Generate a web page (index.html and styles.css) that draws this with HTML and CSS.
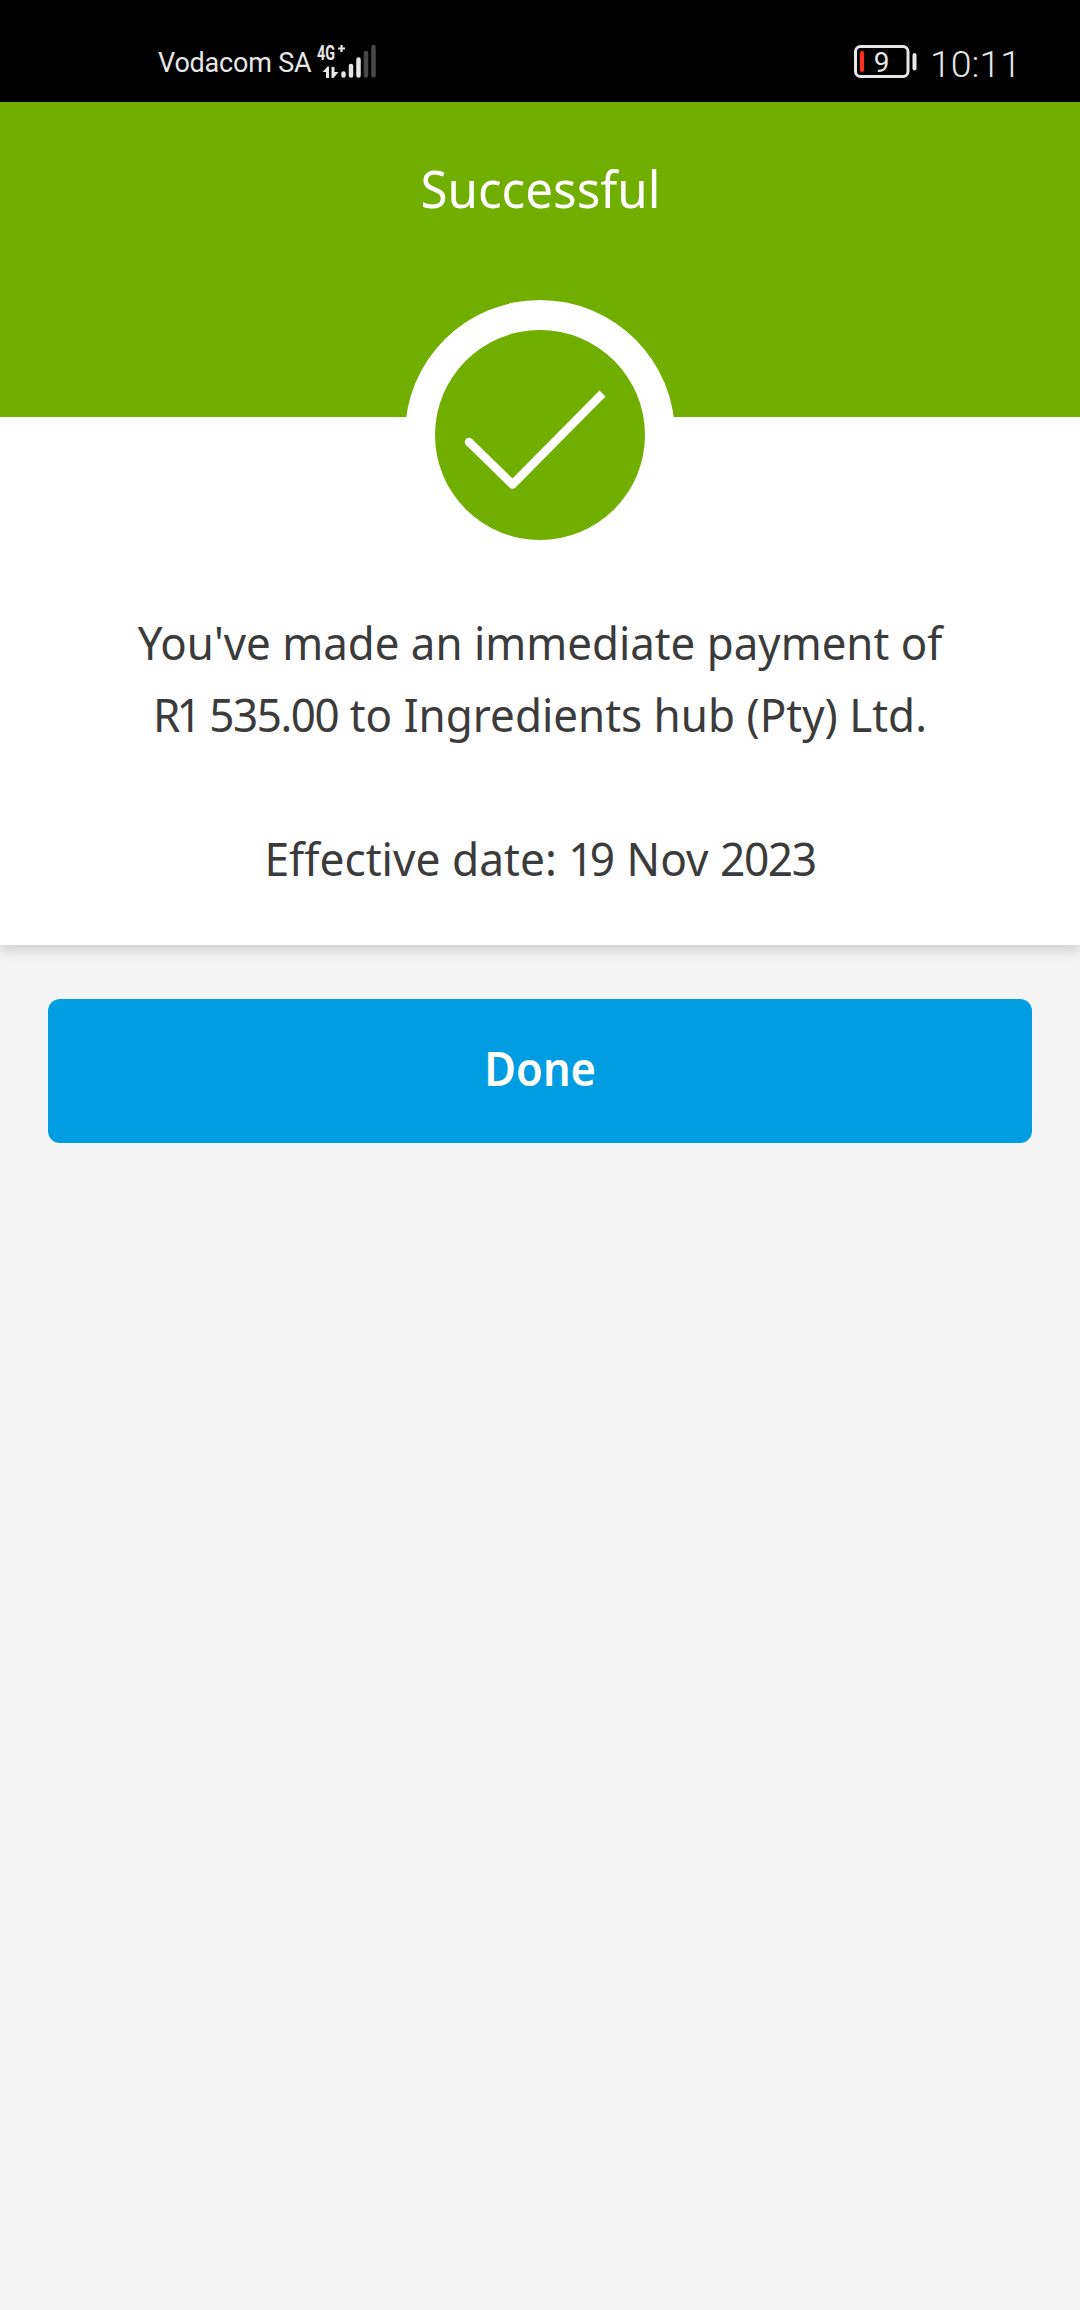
FILE: index.html
```html
<!DOCTYPE html>
<html lang="en">
<head>
<meta charset="utf-8">
<title>Payment successful</title>
<link rel="stylesheet" href="styles.css">
</head>
<body>
<div class="status-bar">
  <div class="network">
    <span class="carrier">Vodacom SA</span>
    <svg class="signal" width="60" height="44" viewBox="0 -8 60 44">
      <text class="signal-type" x="0" y="15.500" textLength="18" lengthAdjust="spacingAndGlyphs">4G</text>
      <path d="M24.500 1v7M21 4.500h7" stroke="#e6e6e6" stroke-width="2.200" fill="none"/>
      <path d="M5.500 28l5-5.500h1.500V34H9v-6z M14.500 23h3v5h4l-5 6h-2z" fill="#e6e6e6"/>
      <g stroke="#e6e6e6" stroke-width="4.500" stroke-linecap="round">
        <path d="M26.500 29.500v2M34 22v9.500M41.500 15.500v16"/>
        <path d="M49 9v22.500M56.500 3v28.500" stroke="#484848"/>
      </g>
    </svg>
  </div>
  <div class="device">
    <svg class="battery" width="64" height="34" viewBox="0 0 64 34">
      <rect x="1.500" y="1.500" width="52.500" height="30" rx="5" fill="none" stroke="#e6e6e6" stroke-width="3"/>
      <path d="M8 8v17" stroke="#ff3120" stroke-width="4.200" stroke-linecap="round"/>
      <path d="M60.500 10v13.500" stroke="#e6e6e6" stroke-width="4" stroke-linecap="round"/>
      <text class="battery-level" x="27.500" y="27" text-anchor="middle">9</text>
    </svg>
    <span class="clock">10:11</span>
  </div>
</div>
<main>
  <section class="result">
    <header class="banner">
      <h1 class="title">Successful</h1>
      <svg class="badge" width="270" height="270" viewBox="0 0 270 270">
        <circle cx="135" cy="135" r="135" fill="#fff"/>
        <circle cx="135" cy="135" r="105" fill="#70ae00"/>
        <path d="M64 142L107.500 184.500L197.500 93.500" fill="none" stroke="#fff" stroke-width="8.500" stroke-linejoin="round"/>
        <circle cx="64" cy="142" r="4.250" fill="#fff"/>
      </svg>
    </header>
    <div class="message">
      <p class="line">You've made an immediate payment of</p>
      <p class="line payee"><span class="one">R</span><span class="one">1</span> <span class="digits">535.00</span> to Ingredients hub (Pty) Ltd.</p>
      <p class="line date">Effective date: <span class="one">1</span>9 Nov <span class="digits">2023</span></p>
    </div>
  </section>
  <button class="done" type="button"><span class="label">Done</span></button>
</main>
</body>
</html>
```
FILE: styles.css
```css
* { box-sizing: border-box; }
body {
  margin: 0;
  min-height: 2310px;
  background: #f4f4f4;
  color: #3b3b3b;
  font-family: "Noto Sans", "Open Sans", sans-serif;
}
.status-bar {
  display: flex;
  justify-content: space-between;
  height: 102px;
  padding: 0 60px 0 158px;
  background: #000;
  color: #e6e6e6;
  font-family: Roboto, sans-serif;
}
.network, .device { display: flex; align-items: flex-start; }
.carrier { width: 159px; padding-top: 47px; font-size: 27px; line-height: 33px; white-space: nowrap; font-weight: 400; letter-spacing: -.2px; }
.signal { margin-top: 36px; }
.signal-type { font: 700 20px Roboto, sans-serif; fill: #e6e6e6; }
.battery { margin-top: 45px; }
.battery-level { font: 400 28px Roboto, sans-serif; fill: #e6e6e6; }
.clock { width: 90px; padding-top: 42px; margin-left: 12px; font-size: 37.500px; line-height: 44px; font-weight: 350; white-space: nowrap; }
.device { width: 166px; margin-right: 0; }
.result { height: 843px; background: #fff; box-shadow: 0 6px 12px rgba(0, 0, 0, .15); }
.banner {
  display: flex;
  flex-direction: column;
  align-items: center;
  height: 315px;
  background: #70ae00;
}
.title {
  margin: 48px 0 0;
  height: 150px;
  flex: none;
  color: #fff;
  font-size: 51.500px;
  font-weight: 380;
  line-height: 76px;
  transform: scaleX(.957);
}
.badge { flex: none; }
.message { padding-top: 189px; text-align: center; }
.line {
  margin: 0;
  font-size: 46px;
  line-height: 72px;
  white-space: nowrap;
  transform: scaleX(.953);
  font-variant-ligatures: none;
}
.one { letter-spacing: -4px; }
.digits { letter-spacing: -1.500px; }
.payee { transform: scaleX(.956); }
.date { margin-top: 72px; transform: scaleX(.962); }
.done {
  display: block;
  width: 984px;
  height: 144px;
  margin: 54px auto 0;
  padding: 0 0 6px;
  border: 0;
  border-radius: 12px;
  background: #009de2;
  color: #fff;
  font: 600 46px/138px "Noto Sans", sans-serif;
}
.label { display: inline-block; transform: scaleX(.943); }
```
